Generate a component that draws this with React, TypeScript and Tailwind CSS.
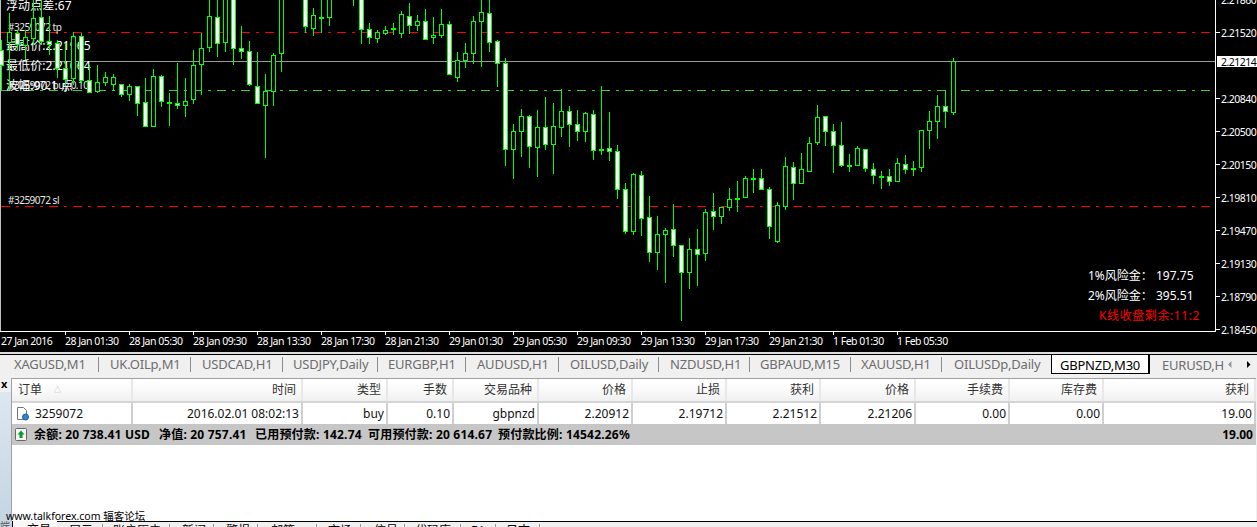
const cjk = "font-['Noto_Sans','Noto_Sans_CJK_SC',sans-serif]";
const axisFont = "font-['Noto_Sans',sans-serif] text-[10.5px] leading-[12px] tracking-[-0.5px]";
const smallLabel = `absolute left-[8px] text-[10px] leading-[12px] tracking-[-0.5px] text-[#e8e8e8] ${cjk}`;
const bigLabel = `absolute left-[6px] text-[12px] leading-[16px] tracking-[0.1px] ${cjk}`;

// x centre, wick top, wick bottom, body top, body bottom, 0 hollow / 1 filled / 2 doji
const candles: [number, number, number, number, number, number][] = [
  [1, 40, 90, 50, 65, 1], [9, 13, 90, 32, 42, 0], [17, 30, 50, 33, 44, 1], [25, 30, 60, 37, 45, 0],
  [33, 0, 45, 18, 38, 0], [41, 0, 45, 17, 41, 1], [49, 16, 55, 41, 44, 1], [57, 40, 78, 43, 68, 1],
  [65, 43, 85, 68, 79, 1], [73, 32, 85, 36, 78, 0], [81, 33, 85, 36, 80, 1], [89, 65, 92, 80, 92, 1],
  [97, 65, 93, 82, 91, 0], [105, 72, 86, 77, 82, 0], [113, 74, 91, 77, 84, 0], [121, 84, 97, 84, 94, 1],
  [129, 84, 101, 86, 94, 0], [137, 86, 116, 86, 103, 1], [145, 78, 127, 102, 126, 1], [153, 69, 127, 76, 126, 0],
  [161, 75, 107, 76, 101, 1], [169, 93, 126, 102, 102, 2], [177, 63, 109, 103, 105, 1], [185, 78, 117, 101, 105, 0],
  [193, 50, 104, 65, 99, 0], [201, 33, 95, 48, 64, 0], [209, 0, 52, 16, 47, 0], [217, 0, 57, 17, 43, 1],
  [225, 0, 52, -2, 42, 0], [233, 0, 65, -2, 48, 1], [241, 26, 59, 48, 51, 1], [249, 41, 86, 51, 84, 1],
  [257, 52, 104, 86, 103, 1], [265, 74, 158, 91, 105, 0], [273, 53, 106, 55, 91, 0], [281, 0, 72, -2, 53, 0],
  [305, 0, 33, -2, 26, 1], [313, 8, 36, 15, 28, 0], [321, 0, 33, 17, 17, 2], [329, 0, 26, -2, 17, 0],
  [353, 0, 6, -2, -2, 0], [361, 0, 44, -2, 29, 1], [369, 23, 44, 29, 37, 1], [377, 30, 43, 32, 38, 0],
  [385, 26, 35, 30, 33, 0], [393, 23, 35, 28, 28, 2], [401, 11, 38, 14, 33, 0], [409, 3, 34, 16, 25, 1],
  [417, 15, 31, 21, 25, 0], [425, 9, 40, 21, 39, 1], [433, 17, 44, 35, 37, 0], [441, 9, 38, 24, 35, 0],
  [449, 21, 75, 24, 74, 1], [457, 52, 82, 60, 77, 0], [465, 43, 68, 53, 60, 0], [473, 16, 64, 21, 53, 0],
  [481, 0, 67, 12, 21, 0], [489, 0, 52, 13, 42, 1], [497, 40, 87, 41, 63, 1], [505, 58, 166, 63, 149, 1],
  [513, 124, 179, 131, 149, 0], [521, 109, 157, 116, 131, 0], [529, 115, 168, 116, 146, 1], [537, 110, 177, 127, 147, 0],
  [545, 97, 150, 127, 144, 1], [553, 103, 174, 126, 144, 0], [561, 89, 137, 111, 127, 0], [569, 106, 147, 111, 124, 1],
  [577, 110, 141, 124, 131, 1], [585, 112, 142, 113, 131, 0], [593, 110, 160, 114, 150, 1], [601, 86, 155, 149, 149, 2],
  [609, 112, 161, 148, 151, 1], [617, 145, 199, 151, 189, 1], [625, 183, 234, 189, 231, 1], [633, 173, 235, 174, 231, 0],
  [641, 171, 236, 175, 218, 1], [649, 196, 262, 217, 252, 1], [657, 216, 270, 234, 252, 0], [665, 228, 283, 230, 234, 0],
  [673, 204, 257, 229, 245, 1], [681, 245, 321, 245, 272, 1], [689, 238, 289, 249, 272, 0], [697, 229, 286, 249, 254, 1],
  [705, 209, 261, 212, 253, 0], [713, 193, 230, 211, 216, 1], [721, 207, 224, 207, 216, 0], [729, 188, 211, 199, 207, 0],
  [737, 181, 212, 198, 198, 2], [745, 176, 197, 178, 197, 0], [753, 169, 193, 178, 178, 2], [761, 169, 189, 178, 189, 1],
  [769, 187, 239, 189, 226, 1], [777, 202, 243, 205, 241, 0], [785, 157, 210, 166, 206, 0], [793, 162, 200, 167, 183, 1],
  [801, 153, 183, 169, 183, 0], [809, 137, 172, 143, 171, 0], [817, 105, 145, 117, 142, 0], [825, 116, 146, 116, 131, 1],
  [833, 124, 173, 131, 145, 1], [841, 122, 167, 145, 165, 1], [849, 154, 172, 165, 165, 2], [857, 146, 166, 148, 165, 0],
  [865, 149, 172, 149, 168, 1], [873, 163, 184, 169, 175, 1], [881, 171, 189, 176, 176, 2], [889, 169, 186, 176, 181, 1],
  [897, 158, 181, 163, 181, 0], [905, 155, 174, 164, 169, 1], [913, 161, 176, 168, 168, 2], [921, 130, 172, 130, 167, 0],
  [929, 111, 149, 121, 130, 0], [937, 95, 139, 106, 121, 0], [945, 90, 128, 106, 111, 1], [953, 58, 115, 61, 112, 0],
];

const dates = ["27 Jan 2016", "28 Jan 01:30", "28 Jan 05:30", "28 Jan 09:30", "28 Jan 13:30", "28 Jan 17:30", "28 Jan 21:30", "29 Jan 01:30", "29 Jan 05:30", "29 Jan 09:30", "29 Jan 13:30", "29 Jan 17:30", "29 Jan 21:30", "1 Feb 01:30", "1 Feb 05:30"];
const prices = ["2.21860", "2.21520", "", "2.20840", "2.20500", "2.20150", "2.19810", "2.19470", "2.19130", "2.18790", "2.18450"];
const tabs = [
  { label: "XAGUSD,M1", cls: "w-[99px] pl-[14px]" },
  { label: "UK.OILp,M1", cls: "w-[92px] pl-[11px]" },
  { label: "USDCAD,H1", cls: "w-[92px] pl-[11px]" },
  { label: "USDJPY,Daily", cls: "w-[95px] pl-[10px]" },
  { label: "EURGBP,H1", cls: "w-[88px] pl-[10px]" },
  { label: "AUDUSD,H1", cls: "w-[93px] pl-[11px]" },
  { label: "OILUSD,Daily", cls: "w-[100px] pl-[11px]" },
  { label: "NZDUSD,H1", cls: "w-[91px] pl-[11px]" },
  { label: "GBPAUD,M15", cls: "w-[101px] pl-[10px]" },
  { label: "XAUUSD,H1", cls: "w-[91px] pl-[10px]" },
  { label: "OILUSDp,Daily", cls: "w-[109px] pl-[12px] border-r-0" },
];
const bottomTabs = [
  { label: "展示", cls: "w-[46px] pl-[12px]" },
  { label: "账户历史", cls: "w-[67px] pl-[10px]" },
  { label: "新闻", cls: "w-[44px] pl-[12px]" },
  { label: "警报", cls: "w-[44px] pl-[12px]" },
  { label: "邮箱", cls: "w-[59px] pl-[13px]" },
  { label: "市场", cls: "w-[44px] pl-[11px]" },
  { label: "信号", cls: "w-[44px] pl-[13px]" },
  { label: "代码库", cls: "w-[56px] pl-[10px]" },
  { label: "EA", cls: "w-[35px] pl-[10px]" },
  { label: "日志", cls: "w-[44px] pl-[10px]" },
];
const summary = [
  { label: "余额: 20 738.41 USD", cls: "w-[125px]" },
  { label: "净值: 20 757.41", cls: "w-[96px]" },
  { label: "已用预付款: 142.74", cls: "w-[113px]" },
  { label: "可用预付款: 20 614.67", cls: "w-[130px]" },
  { label: "预付款比例: 14542.26%", cls: "" },
];
const cols = "grid grid-cols-[121px_170px_85px_66px_85px_94px_94px_94px_95px_94px_94px_152px]";
const head = ["订单", "时间", "类型", "手数", "交易品种", "价格", "止损", "获利", "价格", "手续费", "库存费", "获利"];
const row = ["3259072", "2016.02.01 08:02:13", "buy", "0.10", "gbpnzd", "2.20912", "2.19712", "2.21512", "2.21206", "0.00", "0.00", "19.00"];

function Chart() {
  return (
    <div className="relative h-[352px] bg-black text-white overflow-hidden">
      <div className="absolute left-0 top-0 h-[331px] w-px bg-[#c0c0c0]" />
      <svg className="absolute left-0 top-0" width="1215" height="331" shapeRendering="crispEdges">
        <line x1="1" x2="1210" y1="32.5" y2="32.5" stroke="#ff0000" strokeDasharray="9 6 3 6" />
        <line x1="1" x2="1210" y1="90.5" y2="90.5" stroke="#32cd32" strokeDasharray="9 6 3 6" />
        <line x1="1" x2="1210" y1="206.5" y2="206.5" stroke="#ff0000" strokeDasharray="9 6 3 6" />
        <line x1="1" x2="1215" y1="61.5" y2="61.5" stroke="#999999" />
      </svg>

      {/* labels sit under the candles, the chart is in foreground mode */}
      <div className={`${bigLabel} top-[-2px]`}>浮动点差:67</div>
      <div className={`${smallLabel} top-[21px]`}>#3259072 tp</div>
      <div className={`${bigLabel} top-[38px]`}>最高价:2.21965</div>
      <div className={`${bigLabel} top-[58px]`}>最低价:2.21064</div>
      <div className={`${smallLabel} top-[79px]`}>#3259072 buy 0.10</div>
      <div className={`${bigLabel} top-[78px]`}>波幅:90.1 点</div>
      <div className={`${smallLabel} top-[194px]`}>#3259072 sl</div>

      <svg className="absolute left-0 top-0" width="1215" height="331" shapeRendering="crispEdges">
        {candles.map(([x, hi, lo, top, bot, kind]) => (
          <g key={x}>
            <rect x={x} y={hi} width="1" height={lo - hi} fill="#00ff00" />
            {kind === 2 ? (
              <rect x={x - 2} y={top} width="5" height="2" fill="#00ff00" />
            ) : (
              <rect x={x - 1.5} y={top + 0.5} width="4" height={bot - top} fill={kind === 1 ? "#ffffff" : "#000000"} stroke="#00ff00" />
            )}
          </g>
        ))}
      </svg>

      <div className={`absolute left-[1088px] top-[266px] w-[120px] flex flex-col text-[12px] leading-[20px] whitespace-pre ${cjk}`}>
        <div>1%风险金： 197.75</div>
        <div>2%风险金： 395.51</div>
        <div className="pl-[11px] text-[#ff0000] tracking-[0.6px]">K线收盘剩余:11:2</div>
      </div>

      {/* price scale */}
      <div className="absolute left-[1215px] top-0 bottom-[21px] w-[42px] border-l border-white">
        <div className="flex flex-col mt-[-17px]">
          {prices.map((p, i) => (
            <div key={i} className="h-[33px] flex items-center">
              <div className={p ? "w-[4px] h-px bg-white" : "w-[4px]"} />
              <span className={`ml-[1px] ${axisFont}`}>{p}</span>
            </div>
          ))}
        </div>
        <div className={`absolute left-px top-[56px] w-[40px] h-[11px] bg-white text-black pl-[4px] ${axisFont}`}>2.21214</div>
      </div>

      {/* time scale */}
      <div className={`absolute left-0 top-[331px] w-[1216px] h-[21px] border-t border-white flex whitespace-nowrap ${axisFont}`}>
        {dates.map((d, i) => (
          <div key={d} className="w-[64px] shrink-0 relative">
            {i > 0 && <div className="absolute left-[1px] top-0 w-px h-[3px] bg-white" />}
            <div className="mt-[3px] ml-[1px]">{d}</div>
          </div>
        ))}
      </div>
    </div>
  );
}

function TabBar() {
  return (
    <div className="relative h-[24px] bg-[#f0f0f0] border-t border-t-black flex items-start font-['Noto_Sans',sans-serif] text-[13px] leading-[18px] tracking-[-0.2px] text-[#6d6d6d] whitespace-nowrap overflow-hidden">
      <div className="flex w-[1051px] shrink-0 mt-[2px]">
        {tabs.map((t) => (
          <div key={t.label} className={`${t.cls} h-[15px] leading-[15px] shrink-0 border-r border-[#8c8c8c]`}>{t.label}</div>
        ))}
      </div>
      <div className="w-[99px] h-[19px] bg-white border-l border-r-2 border-b border-black text-black text-center shrink-0 pt-px">GBPNZD,M30</div>
      <div className="pl-[12px] pt-px w-[75px] overflow-hidden shrink-0">EURUSD,H</div>
      <svg className="absolute left-[1228px] top-[6px]" width="4" height="7" viewBox="0 0 4 7"><path d="M3.5 0v7L0 3.5z" fill="#999999" /></svg>
      <svg className="absolute left-[1247px] top-[6px]" width="4" height="7" viewBox="0 0 4 7"><path d="M0 0v7L3.5 3.5z" fill="#000000" /></svg>
    </div>
  );
}

function Table() {
  return (
    <div className="flex h-[143px] bg-[#f0f0f0]">
      <div className="w-[11px] shrink-0 flex flex-col relative overflow-hidden">
        <div className="h-[14px] text-[11px] leading-[11px] font-bold text-black pl-[1px] font-['Noto_Sans',sans-serif]">x</div>
        <div className="flex-1 bg-gradient-to-b from-[#dce7f2] to-[#c5d5e3]" />
      </div>
      <div className={`w-[1245px] border-l border-t border-[#a0a0a0] bg-white text-[12px] leading-[16px] text-[#111111] ${cjk}`}>
        <div className={`${cols} h-[24px] bg-gradient-to-b from-white via-[#fafafa] to-[#f0f0f0] border-b-2 border-b-[#d4d4d4] text-[#333333]`}>
          {head.map((h, i) => (
            <div key={i} className={`flex items-center border-r-2 border-[#e8e8e8] pr-[5px] ${i === 0 ? "pl-[6px] gap-[12px]" : "justify-end"}`}>
              <span>{h}</span>
              {i === 0 && <span className="text-[7px] text-[#aaaaaa]">△</span>}
            </div>
          ))}
        </div>
        <div className={`${cols} h-[21px]`}>
          {row.map((c, i) => (
            <div key={i} className={`flex items-center border-r-2 border-[#cfcfcf] pr-[2px] ${i === 0 ? "pl-[3px] gap-[5px]" : "justify-end"}`}>
              {i === 0 && (
                <svg width="15" height="15" viewBox="0 0 15 15">
                  <path d="M2.5 1.5h6l3 3v9h-9z" fill="#fff" stroke="#6a7682" />
                  <circle cx="10.5" cy="11" r="3" fill="#2b86d8" stroke="#1a5f9e" />
                </svg>
              )}
              <span>{c}</span>
            </div>
          ))}
        </div>
        <div className="h-[21px] bg-[#c6c6c6] flex items-center justify-between font-bold pl-[3px] pr-[3px] text-black">
          <div className="flex items-center whitespace-pre tracking-[0.2px]">
            <svg className="mr-[7px]" width="12" height="13" viewBox="0 0 12 13">
              <rect x=".5" y=".5" width="11" height="12" rx="1" fill="#f4f4f4" stroke="#666666" />
              <path d="M6 2.5 9.5 6.5H7.5V10h-3V6.5H2.5z" fill="#0a9a2a" />
            </svg>
            {summary.map((s) => (
              <span key={s.label} className={s.cls}>{s.label}</span>
            ))}
          </div>
          <span>19.00</span>
        </div>
      </div>
    </div>
  );
}

function BottomTabs() {
  return (
    <div className={`flex h-[6px] overflow-hidden text-[12px] leading-[14px] text-black whitespace-nowrap ${cjk}`}>
      <div className="w-[12px] shrink-0 bg-[#c5d5e3] text-[#555555] text-[10px] leading-[10px] overflow-hidden">端</div>
      <div className="w-[45px] shrink-0 bg-[#f8f8f8] border-l border-black pl-[14px] pt-[2px]">交易</div>
      <div className="flex-1 flex border-t border-black pt-[2px]">
        {bottomTabs.map((t) => (
          <div key={t.label} className={`${t.cls} shrink-0 border-r border-[#9a9a9a]`}>{t.label}</div>
        ))}
      </div>
    </div>
  );
}

export default function App() {
  return (
    <div className="relative h-[527px] w-[1257px] overflow-hidden bg-[#f0f0f0]">
      <Chart />
      <div className="h-[2px] bg-[#dcdcdc]" />
      <TabBar />
      <Table />
      <BottomTabs />
      <div className={`absolute left-[6px] top-[510px] text-[10.5px] leading-[13px] text-black ${cjk}`}>www.talkforex.com 辐客论坛</div>
    </div>
  );
}
